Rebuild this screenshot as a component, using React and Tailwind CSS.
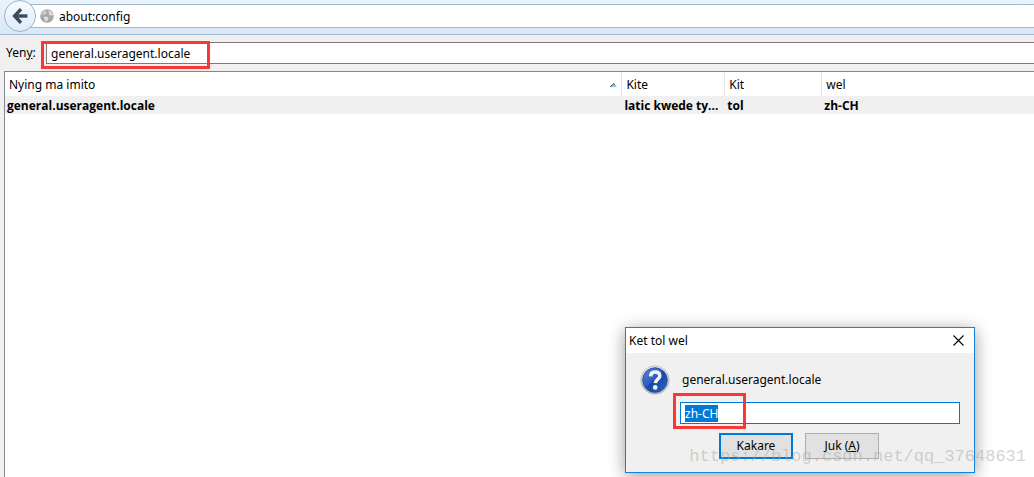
import React, { useEffect, useRef, useState } from 'react';

const prefs = [
  { name: 'general.useragent.locale', status: 'latic kwede ty...', type: 'tol', value: 'zh-CH' },
];

const BackIcon = () => (
  <svg width="16" height="16" viewBox="0 0 16 16" fill="none" stroke="#3c4a5c" strokeWidth="3.4">
    <path d="M15.5 8H3" />
    <path d="M9 1.2L2.6 8L9 14.8" strokeLinejoin="miter" />
  </svg>
);

const GlobeIcon = () => (
  <svg width="14" height="14" viewBox="0 0 14 14" className="shrink-0">
    <circle cx="7" cy="7" r="6.8" fill="#a5a5a5" />
    <path d="M1.6 3.6L4.3 1.4L7 1.7L6.2 3.2L7.4 4.1L5.5 5.5L4.1 6L3 5.3L2.2 6.6L1 6Z" fill="#c9c9c9" />
    <path d="M7.6 2.4L9.4 1.6L11.6 3L12.8 5.5L12.2 7.2L10.8 6L9.2 6.4L8.6 5L9.6 3.9Z" fill="#dedede" />
    <path d="M3.6 7.8L6.4 7.4L8.7 9.2L7.8 11L6.2 12.6L4.8 11.6L4.6 9.8Z" fill="#e2e2e2" />
  </svg>
);

const QuestionIcon = () => (
  <svg width="30" height="30" viewBox="0 0 30 30" className="shrink-0">
    <defs>
      <linearGradient id="rim" x1="0" y1="0" x2="0" y2="1">
        <stop offset="0" stopColor="#f0f0f0" />
        <stop offset="1" stopColor="#a8adb5" />
      </linearGradient>
      <linearGradient id="disc" x1="0" y1="0" x2="1" y2="1">
        <stop offset="0" stopColor="#5b8ade" />
        <stop offset="0.45" stopColor="#2c5dc0" />
        <stop offset="0.5" stopColor="#1746a6" />
        <stop offset="1" stopColor="#2a63cc" />
      </linearGradient>
    </defs>
    <circle cx="15" cy="15" r="14.2" fill="url(#rim)" stroke="#b4b8be" strokeWidth="0.8" />
    <circle cx="15" cy="15" r="12.3" fill="url(#disc)" stroke="#1d489c" strokeWidth="0.8" />
    <path
      d="M10.6 11.4C10.7 8.4 12.6 7 15.1 7C17.9 7 19.8 8.5 19.8 11C19.8 14.3 15.6 14 15.3 18.2"
      fill="none"
      stroke="#f4f4f4"
      strokeWidth="3.6"
    />
    <circle cx="15.2" cy="22.4" r="2.3" fill="#f4f4f4" />
  </svg>
);

const Toolbar = () => (
  <header className="flex h-[35px] items-start border-b border-[#a3b9d0] bg-linear-to-b from-[#eaf3fc] to-[#d9e8f8] pt-1">
    <div className="relative z-10 -mt-1 ml-1 w-8 shrink-0">
      <button
        aria-label="Back"
        className="flex size-8 items-center justify-center rounded-full border border-[#9db2ca] bg-linear-to-b from-[#f8fbfe] to-[#dfebf8]"
      >
        <BackIcon />
      </button>
    </div>
    <div className="-ml-4 flex h-6 grow items-center border-y border-[#a3b7cd] bg-white pl-5">
      <GlobeIcon />
      <input
        aria-label="Address"
        defaultValue="about:config"
        className="ml-[5px] h-5 min-w-0 grow bg-transparent text-[12px] outline-none"
      />
    </div>
  </header>
);

const PrefTable = () => (
  <main className="ml-1 grow border-t border-l border-[#828790] bg-white">
    <table className="w-full table-fixed border-separate border-spacing-0 text-left">
      <colgroup>
        <col className="w-[60%]" />
        <col className="w-[10%]" />
        <col className="w-[97px]" />
        <col />
      </colgroup>
      <thead>
        <tr className="h-6">
          <th className="border-r border-[#e5e5e5] px-1 pt-0.5 pb-0 font-normal">
            <div className="flex items-center justify-between">
              Nying ma imito
              <svg width="7" height="4" viewBox="0 0 7 4">
                <path d="M0 4L3.5 0L7 4Z" fill="#8fc0d8" />
                <path d="M0 4L3.5 0.4L5 2" fill="none" stroke="#3f6478" />
              </svg>
            </div>
          </th>
          <th className="border-r border-[#e5e5e5] px-1 pt-0.5 pb-0 font-normal">Kite</th>
          <th className="border-r border-[#e5e5e5] px-1 pt-0.5 pb-0 font-normal">Kit</th>
          <th className="px-1 pt-0.5 pb-0 font-normal">wel</th>
        </tr>
      </thead>
      <tbody>
        {prefs.map((pref) => (
          <tr key={pref.name} className="h-[18px] bg-[#f0f0f0] font-['Open_Sans',sans-serif] font-bold">
            <td className="px-0.5 pt-0.5 pb-0">{pref.name}</td>
            <td className="truncate px-0.5 pt-0.5 pb-0">{pref.status}</td>
            <td className="px-0.5 pt-0.5 pb-0">{pref.type}</td>
            <td className="px-0.5 pt-0.5 pb-0">{pref.value}</td>
          </tr>
        ))}
      </tbody>
    </table>
  </main>
);

const ValueDialog = () => {
  const [value, setValue] = useState('zh-CH');
  const inputRef = useRef(null);

  // the value starts out selected, ready to be typed over
  useEffect(() => {
    inputRef.current.focus();
    inputRef.current.select();
  }, []);

  return (
    <section
      role="dialog"
      aria-labelledby="dialog-title"
      className="absolute right-[59px] bottom-1 w-[350px] border border-[#1a80d9] bg-[#f0f0f0] shadow-[0_3px_16px_rgba(0,0,0,0.4)]"
    >
      <div className="flex h-[25px] items-center justify-between bg-white pr-2.5 pl-[3px]">
        <h2 id="dialog-title">Ket tol wel</h2>
        <button aria-label="Close">
          <svg width="11" height="11" viewBox="0 0 11 11" stroke="#000" strokeWidth="1.1">
            <path d="M0.5 0.5L10.5 10.5M10.5 0.5L0.5 10.5" />
          </svg>
        </button>
      </div>
      <div className="px-3.5 pt-3 pb-[13px]">
        <div className="flex h-[30px] items-center gap-3">
          <QuestionIcon />
          <label htmlFor="pref-value">general.useragent.locale</label>
        </div>
        <div className="relative mt-[7px] ml-10">
          <input
            id="pref-value"
            ref={inputRef}
            value={value}
            onChange={(e) => setValue(e.target.value)}
            className="block h-[22px] w-full border border-[#0078d7] bg-white px-1 text-[12px] outline-none selection:bg-[#0078d7] selection:text-white"
          />
          <div className="pointer-events-none absolute -top-[9px] -left-[7px] h-9 w-[73px] border-3 border-[#fd3535]" />
        </div>
        <div className="mt-[9px] flex justify-center gap-3 pr-0.5">
          <button className="h-[26px] w-[74px] border-2 border-[#0078d7] bg-[#e1e1e1]">Kakare</button>
          <button className="h-[26px] w-[74px] border border-[#adadad] bg-[#e1e1e1]">
            Juk (<u>A</u>)
          </button>
        </div>
      </div>
    </section>
  );
};

export default function App() {
  return (
    <div className="relative flex min-h-screen flex-col overflow-hidden bg-[#f0f0f0] font-['Noto_Sans','Noto_Sans_CJK_SC',sans-serif] text-[12px] leading-4 text-black">
      <Toolbar />
      <div className="flex h-9 items-center pl-1.5">
        <label htmlFor="filter" className="w-10 shrink-0">
          Yen<u>y</u>:
        </label>
        <div className="relative grow">
          <input
            id="filter"
            defaultValue="general.useragent.locale"
            className="block h-[22px] w-full border border-r-0 border-[#7a7a7a] bg-white px-1 text-[12px] outline-none"
          />
          <div className="pointer-events-none absolute -top-px -left-[5px] h-7 w-[169px] border-3 border-[#fd3535]" />
        </div>
      </div>
      <PrefTable />
      <ValueDialog />
      <p className="pointer-events-none absolute right-2 bottom-2 font-['Liberation_Mono',monospace] text-[17px] leading-6 text-[#a8a8a0]/50">
        https://blog.csdn.net/qq_37648631
      </p>
    </div>
  );
}
